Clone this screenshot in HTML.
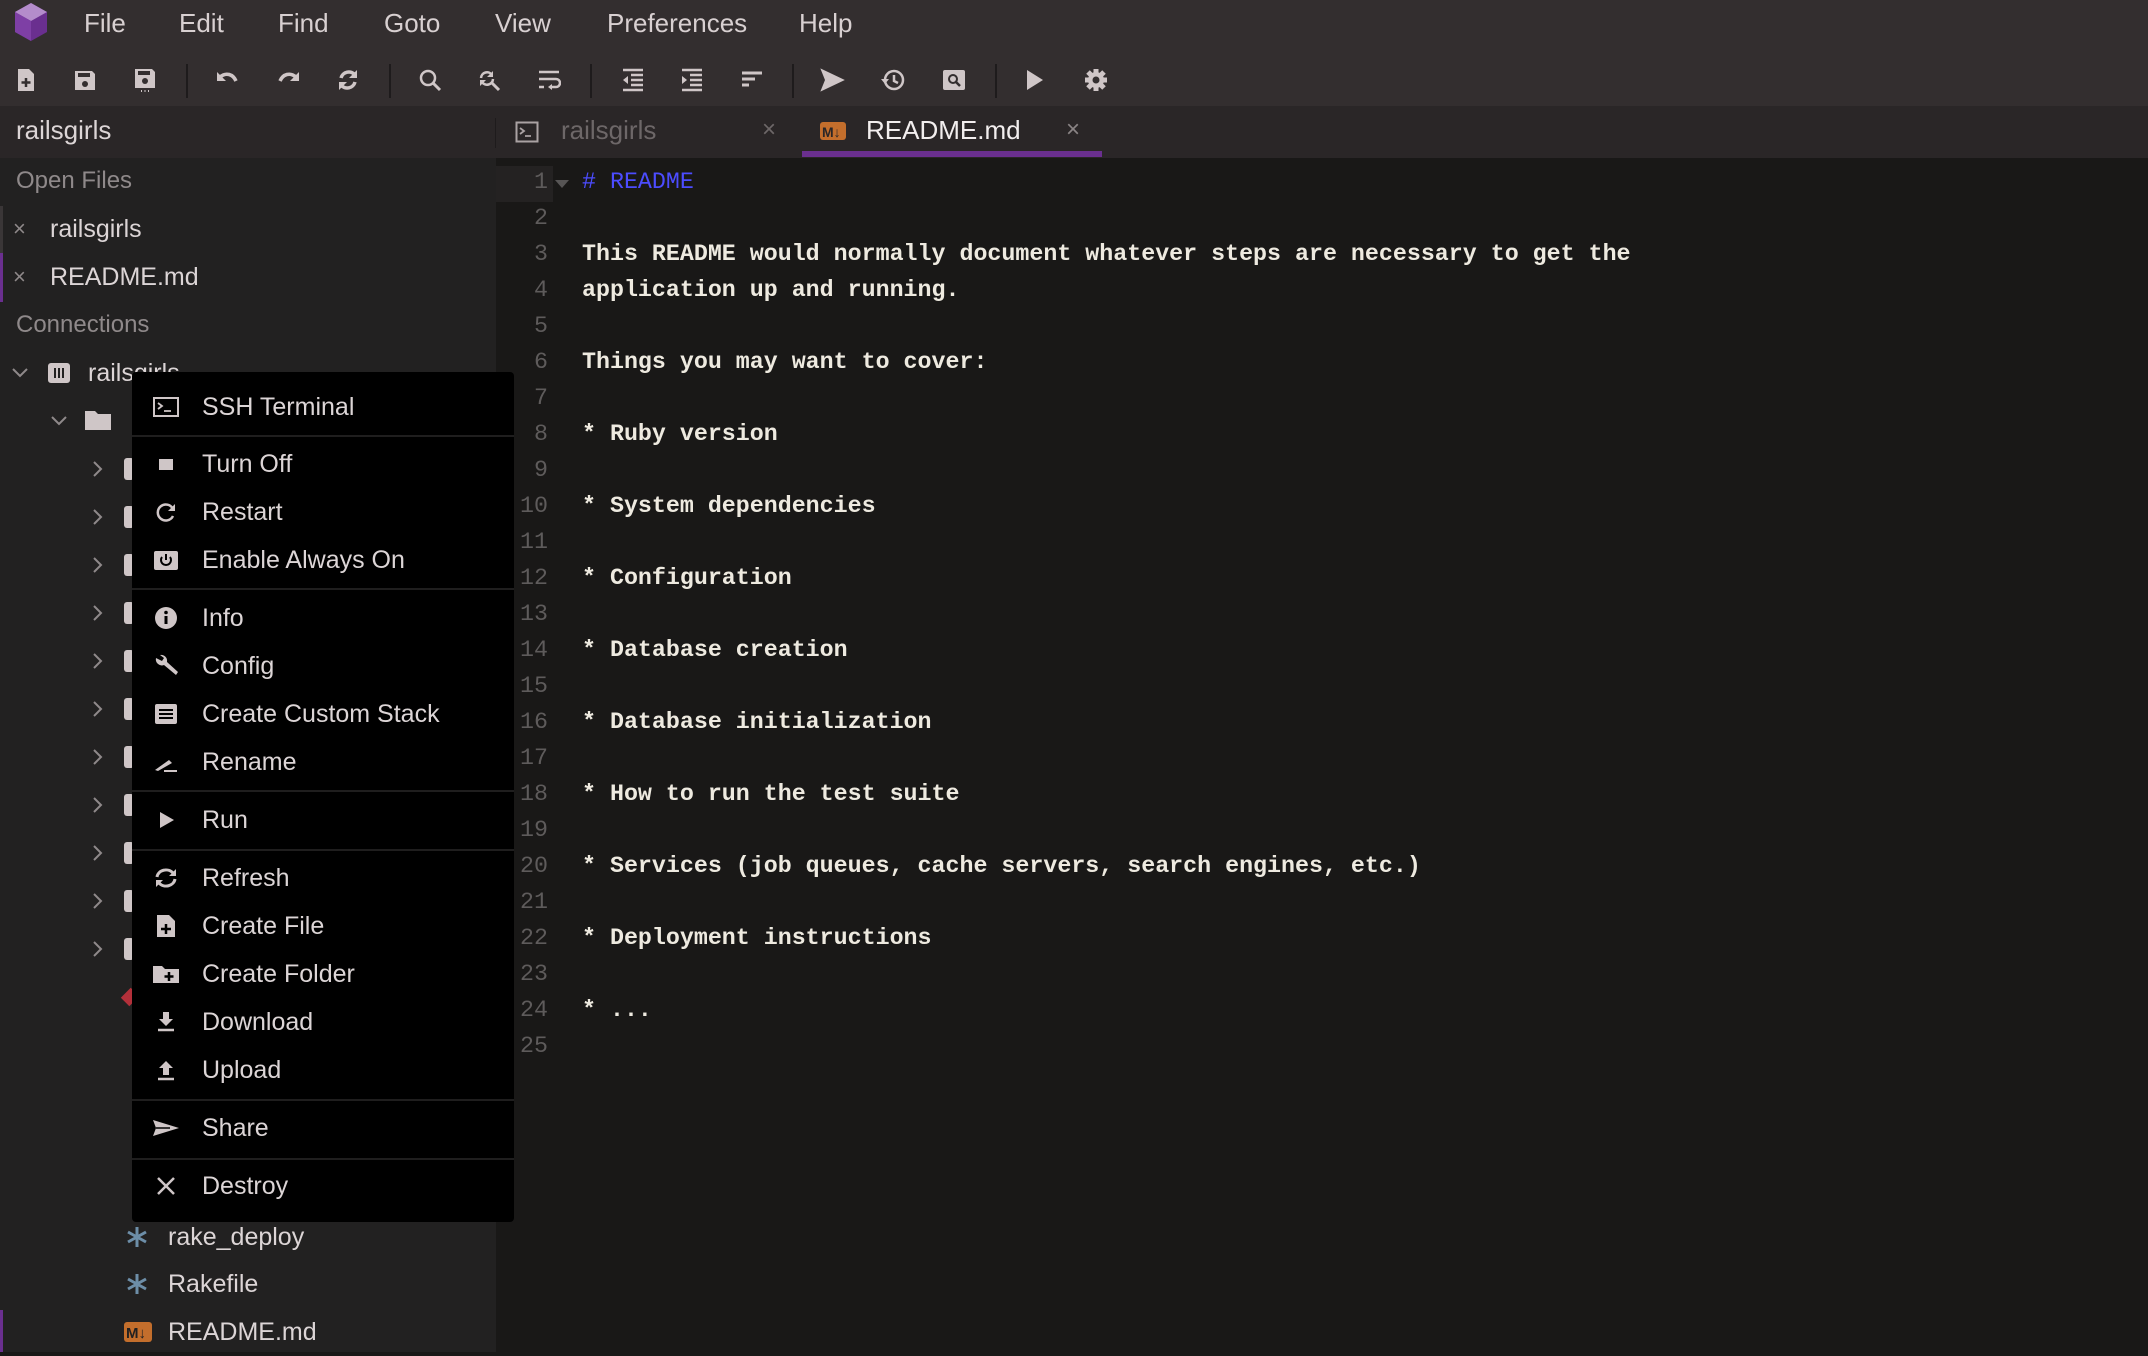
<!DOCTYPE html>
<html><head><meta charset="utf-8"><style>
*{margin:0;padding:0;box-sizing:border-box}
body{width:2148px;height:1352px;overflow:hidden;background:#191817;font-family:"Liberation Sans",sans-serif;position:relative}
.a{position:absolute;white-space:nowrap}
#top{left:0;top:0;width:2148px;height:106px;background:#332e2f}
#tabs{left:0;top:106px;width:2148px;height:52px;background:#2a2627}
#side{left:0;top:158px;width:496px;height:1194px;background:#222121}
.mn{top:8px;font-size:26px;color:#d8d0d1}
.tb{top:68px;width:24px;height:24px}
.sep{top:64px;width:2px;height:34px;background:#1e1b1c}
.st{font-size:25px;color:#dcd5d6;line-height:48px;height:48px}
.hd{font-size:24px;color:#8f898a}
#menu{left:132px;top:372px;width:382px;height:850px;background:#000;border-radius:4px}
.mi{left:70px;font-size:25px;color:#dcd5d6;line-height:48px;height:48px}
.mic{left:20px;width:28px;height:28px}
.ms{left:0;width:382px;height:2px;background:#1f1e1e}
#code{left:582px;top:164px;font-family:"Liberation Mono",monospace;font-weight:bold;font-size:23.3px;line-height:36px;color:#eeeae0;white-space:pre}
#ln{left:496px;top:164px;width:52px;font-family:"Liberation Mono",monospace;font-size:23.3px;line-height:36px;color:#5e5b5b;text-align:right;white-space:pre}
</style></head><body>
<div class="a" id="top"></div>
<div class="a" id="tabs"></div>
<div class="a" id="side"></div>
<div class="a" style="left:0;top:106px;width:496px;height:52px;background:#2a2627"></div>

<svg class="a" style="left:13px;top:2px" width="36" height="40" viewBox="0 0 36 40"><polygon points="18,1 34,10 34,30 18,39 2,30 2,10" fill="#6a2f8f"/><polygon points="18,1 34,10 18,19 2,10" fill="#b48ccb"/><polygon points="18,19 18,39 2,30 2,10" fill="#7e3fa5"/></svg>
<div class="a mn" style="left:84px">File</div>
<div class="a mn" style="left:179px">Edit</div>
<div class="a mn" style="left:278px">Find</div>
<div class="a mn" style="left:384px">Goto</div>
<div class="a mn" style="left:495px">View</div>
<div class="a mn" style="left:607px">Preferences</div>
<div class="a mn" style="left:799px">Help</div>

<svg class="a tb" style="left:14px" viewBox="0 0 24 24"><path d="M4 1h11l5 5v17H4z" fill="#cfc6c7"/><path d="M12 10v9M7.5 14.5h9" stroke="#332e2f" stroke-width="2.5"/></svg>
<svg class="a tb" style="left:73px" viewBox="0 0 24 24"><path d="M2 3h17l3 3v16H2z" fill="#cfc6c7"/><rect x="5" y="5" width="12" height="4" fill="#332e2f"/><circle cx="12" cy="16" r="3" fill="#332e2f"/></svg>
<svg class="a tb" style="left:133px" viewBox="0 0 24 24"><path d="M2 1h17l3 3v16H2z" fill="#cfc6c7"/><rect x="5" y="3" width="12" height="4" fill="#332e2f"/><circle cx="12" cy="13" r="3" fill="#332e2f"/><path d="M8 23h1M11.5 23h1M15 23h1" stroke="#cfc6c7" stroke-width="2"/></svg>
<div class="a sep" style="left:186px"></div>
<svg class="a tb" style="left:215px" viewBox="0 0 24 24"><path d="M5 9c6-5 13-3 16 4" stroke="#cfc6c7" stroke-width="3.5" fill="none"/><path d="M2 4v9h9z" fill="#cfc6c7"/></svg>
<svg class="a tb" style="left:277px" viewBox="0 0 24 24"><path d="M19 9c-6-5-13-3-16 4" stroke="#cfc6c7" stroke-width="3.5" fill="none"/><path d="M22 4v9h-9z" fill="#cfc6c7"/></svg>
<svg class="a tb" style="left:336px" viewBox="0 0 24 24"><path d="M5 10a8 8 0 0 1 14-3M19 14a8 8 0 0 1-14 3" stroke="#cfc6c7" stroke-width="3.5" fill="none"/><path d="M21 2v8h-8zM3 22v-8h8z" fill="#cfc6c7"/></svg>
<div class="a sep" style="left:389px"></div>
<svg class="a tb" style="left:418px" viewBox="0 0 24 24"><circle cx="10" cy="10" r="7" stroke="#cfc6c7" stroke-width="2.5" fill="none"/><path d="M15 15l7 7" stroke="#cfc6c7" stroke-width="3"/></svg>
<svg class="a tb" style="left:477px" viewBox="0 0 24 24"><path d="M4 10a6 6 0 0 1 11-3M16 11a6 6 0 0 1-11 3" stroke="#cfc6c7" stroke-width="2.5" fill="none"/><path d="M16 3v6h-6zM3 18v-6h6z" fill="#cfc6c7"/><path d="M15 15l7 7" stroke="#cfc6c7" stroke-width="3"/></svg>
<svg class="a tb" style="left:537px" viewBox="0 0 24 24"><path d="M2 4h20M2 11h17a4 4 0 0 1 0 8h-6M2 19h5" stroke="#cfc6c7" stroke-width="2.5" fill="none"/><path d="M11 19l4-3v6z" fill="#cfc6c7"/></svg>
<div class="a sep" style="left:590px"></div>
<svg class="a tb" style="left:621px" viewBox="0 0 24 24"><path d="M2 2h20M10 7h12M10 12h12M10 17h12M2 22h20" stroke="#cfc6c7" stroke-width="2.5"/><path d="M7 8v8l-5-4z" fill="#cfc6c7"/></svg>
<svg class="a tb" style="left:680px" viewBox="0 0 24 24"><path d="M2 2h20M10 7h12M10 12h12M10 17h12M2 22h20" stroke="#cfc6c7" stroke-width="2.5"/><path d="M2 8v8l5-4z" fill="#cfc6c7"/></svg>
<svg class="a tb" style="left:740px" viewBox="0 0 24 24"><path d="M2 5h20M2 11h13M2 17h7" stroke="#cfc6c7" stroke-width="3"/></svg>
<div class="a sep" style="left:792px"></div>
<svg class="a tb" style="left:818px;width:28px;height:28px;top:66px" viewBox="0 0 24 24"><path d="M2 2l21 10L2 22l4-10z" fill="#cfc6c7"/></svg>
<svg class="a tb" style="left:881px" viewBox="0 0 24 24"><circle cx="13" cy="12" r="9" stroke="#cfc6c7" stroke-width="2.5" fill="none"/><path d="M13 7v6l4 2" stroke="#cfc6c7" stroke-width="2.5" fill="none"/><path d="M0 11h8l-4 5z" fill="#cfc6c7"/></svg>
<svg class="a tb" style="left:942px" viewBox="0 0 24 24"><rect x="1" y="2" width="22" height="20" rx="2" fill="#cfc6c7"/><circle cx="11" cy="11" r="4" stroke="#332e2f" stroke-width="2" fill="none"/><path d="M14 14l4 4" stroke="#332e2f" stroke-width="2.5"/></svg>
<div class="a sep" style="left:995px"></div>
<svg class="a tb" style="left:1022px" viewBox="0 0 24 24"><path d="M5 2l16 10L5 22z" fill="#cfc6c7"/></svg>
<svg class="a tb" style="left:1084px" viewBox="0 0 24 24"><circle cx="12" cy="12" r="8" fill="#cfc6c7"/><path d="M12 1v22M1 12h22M4 4l16 16M20 4L4 20" stroke="#cfc6c7" stroke-width="5"/><circle cx="12" cy="12" r="3.5" fill="#332e2f"/></svg>

<div class="a" style="left:16px;top:115px;font-size:26px;color:#dcd5d6">railsgirls</div>
<div class="a" style="left:495px;top:118px;width:1px;height:30px;background:#1e1b1c"></div>
<svg class="a" style="left:515px;top:120px" width="24" height="24" viewBox="0 0 24 24"><rect x="1.5" y="2.5" width="21" height="19" stroke="#aaa2a3" stroke-width="2" fill="none"/><path d="M5 8l4 3-4 3M10 16h6" stroke="#aaa2a3" stroke-width="1.8" fill="none"/></svg>
<div class="a" style="left:561px;top:115px;font-size:26px;color:#6d6768">railsgirls</div>
<div class="a" style="left:762px;top:116px;font-size:24px;color:#6d6768">×</div>
<svg class="a" style="left:820px;top:122px" width="26" height="18" viewBox="0 0 26 18"><rect width="26" height="18" rx="3" fill="#c36e2c"/><text x="2" y="15" font-family="Liberation Sans" font-weight="bold" font-size="14" fill="#2a2627">M↓</text></svg>
<div class="a" style="left:866px;top:115px;font-size:26px;color:#f2eeee">README.md</div>
<div class="a" style="left:1066px;top:116px;font-size:24px;color:#8a8485">×</div>
<div class="a" style="left:802px;top:151px;width:300px;height:6px;background:#6a2f8f"></div>

<div class="a hd" style="left:16px;top:167px">Open Files</div>
<div class="a" style="left:0;top:206px;width:3px;height:47px;background:#3a3637"></div>
<div class="a" style="left:0;top:253px;width:3px;height:49px;background:#6a2f8f"></div>
<div class="a st" style="left:13px;top:205px;color:#8f898a;font-size:22px">×</div>
<div class="a st" style="left:50px;top:205px">railsgirls</div>
<div class="a st" style="left:13px;top:253px;color:#8f898a;font-size:22px">×</div>
<div class="a st" style="left:50px;top:253px">README.md</div>
<div class="a hd" style="left:16px;top:311px">Connections</div>
<svg class="a" style="left:11px;top:366px" width="18" height="14" viewBox="0 0 18 14"><path d="M2 3l7 7 7-7" stroke="#8f898a" stroke-width="2" fill="none"/></svg>
<svg class="a" style="left:47px;top:361px" width="24" height="24" viewBox="0 0 24 24"><rect x="1" y="2" width="22" height="20" rx="3" fill="#cfc6c7"/><path d="M8 7v10M12 7v10M16 7v10" stroke="#222121" stroke-width="2"/></svg>
<div class="a st" style="left:88px;top:349px">railsgirls</div>
<svg class="a" style="left:50px;top:414px" width="18" height="14" viewBox="0 0 18 14"><path d="M2 3l7 7 7-7" stroke="#8f898a" stroke-width="2" fill="none"/></svg>
<svg class="a" style="left:84px;top:408px" width="28" height="24" viewBox="0 0 28 24"><path d="M1 3h10l3 3h13v16H1z" fill="#cfc6c7"/></svg>
<div id="chev"></div>
<script>
var h='';for(var k=0;k<11;k++){var y=469+48*k;h+='<svg class="a" style="left:91px;top:'+(y-9)+'px" width="14" height="18" viewBox="0 0 14 18"><path d="M3 2l7 7-7 7" stroke="#8f898a" stroke-width="2" fill="none"/></svg><div class="a" style="left:124px;top:'+(y-11)+'px;width:10px;height:22px;border-radius:3px;background:#cfc6c7"></div>';}
document.getElementById('chev').outerHTML=h;
</script>
<div class="a" style="left:124px;top:990px;width:12px;height:14px;background:#b3303a;transform:rotate(45deg)"></div>
<div class="a" style="left:0;top:1310px;width:3px;height:42px;background:#6a2f8f"></div>
<svg class="a" style="left:126px;top:1226px" width="22" height="22" viewBox="0 0 22 22"><path d="M11 1v20M2 6l18 10M2 16L20 6" stroke="#6d8ea8" stroke-width="3"/></svg>
<div class="a st" style="left:168px;top:1213px">rake_deploy</div>
<svg class="a" style="left:126px;top:1273px" width="22" height="22" viewBox="0 0 22 22"><path d="M11 1v20M2 6l18 10M2 16L20 6" stroke="#6d8ea8" stroke-width="3"/></svg>
<div class="a st" style="left:168px;top:1260px">Rakefile</div>
<svg class="a" style="left:124px;top:1322px" width="28" height="20" viewBox="0 0 28 20"><rect width="28" height="20" rx="3" fill="#c36e2c"/><text x="2" y="16" font-family="Liberation Sans" font-weight="bold" font-size="15" fill="#222121">M↓</text></svg>
<div class="a st" style="left:168px;top:1308px">README.md</div>

<div class="a" style="left:496px;top:166px;width:57px;height:36px;background:#242222"></div>
<svg class="a" style="left:554px;top:178px" width="16" height="12" viewBox="0 0 16 12"><path d="M1 2h14l-7 8z" fill="#575555"/></svg>
<div class="a" id="ln">1
2
3
4
5
6
7
8
9
10
11
12
13
14
15
16
17
18
19
20
21
22
23
24
25</div>
<div class="a" id="code"><span style="color:#4c4cff;font-weight:normal"># README</span>

This README would normally document whatever steps are necessary to get the
application up and running.

Things you may want to cover:

* Ruby version

* System dependencies

* Configuration

* Database creation

* Database initialization

* How to run the test suite

* Services (job queues, cache servers, search engines, etc.)

* Deployment instructions

* ...
</div>

<div class="a" id="menu">
<svg class="a mic" style="top:21px" viewBox="0 0 28 28"><rect x="2" y="5" width="24" height="18" stroke="#cfc6c7" stroke-width="2" fill="none"/><path d="M6 10l4 3-4 3M12 18h7" stroke="#cfc6c7" stroke-width="1.8" fill="none"/></svg>
<div class="a mi" style="top:11px">SSH Terminal</div>
<div class="a ms" style="top:63px"></div>
<svg class="a mic" style="top:78px" viewBox="0 0 28 28"><rect x="7" y="9" width="14" height="11" fill="#cfc6c7"/></svg>
<div class="a mi" style="top:68px">Turn Off</div>
<svg class="a mic" style="top:126px" viewBox="0 0 28 28"><path d="M21 11a8 8 0 1 0 0 7" stroke="#cfc6c7" stroke-width="2.5" fill="none"/><path d="M23 6v7h-7z" fill="#cfc6c7"/></svg>
<div class="a mi" style="top:116px">Restart</div>
<svg class="a mic" style="top:174px" viewBox="0 0 28 28"><rect x="2" y="5" width="24" height="19" rx="2" fill="#cfc6c7"/><path d="M10 11a5 5 0 1 0 8 0" stroke="#000" stroke-width="2" fill="none"/><path d="M14 8v6" stroke="#000" stroke-width="2"/></svg>
<div class="a mi" style="top:164px">Enable Always On</div>
<div class="a ms" style="top:216px"></div>
<svg class="a mic" style="top:232px" viewBox="0 0 28 28"><circle cx="14" cy="14" r="11" fill="#cfc6c7"/><rect x="12.5" y="12" width="3" height="8" fill="#000"/><circle cx="14" cy="8.5" r="1.8" fill="#000"/></svg>
<div class="a mi" style="top:222px">Info</div>
<svg class="a mic" style="top:280px" viewBox="0 0 28 28"><path d="M4 6a6 6 0 0 0 8 7l12 10 2-3-11-10a6 6 0 0 0-7-7l4 3-2 3z" fill="#cfc6c7"/></svg>
<div class="a mi" style="top:270px">Config</div>
<svg class="a mic" style="top:328px" viewBox="0 0 28 28"><rect x="3" y="4" width="22" height="20" rx="2" fill="#cfc6c7"/><path d="M7 10h14M7 14h14M7 18h14" stroke="#000" stroke-width="2"/></svg>
<div class="a mi" style="top:318px">Create Custom Stack</div>
<svg class="a mic" style="top:376px" viewBox="0 0 28 28"><path d="M3 22l14-10 3 3-14 8z" fill="#cfc6c7"/><path d="M12 23h13" stroke="#cfc6c7" stroke-width="2"/></svg>
<div class="a mi" style="top:366px">Rename</div>
<div class="a ms" style="top:418px"></div>
<svg class="a mic" style="top:434px" viewBox="0 0 28 28"><path d="M8 6l14 8-14 8z" fill="#cfc6c7"/></svg>
<div class="a mi" style="top:424px">Run</div>
<div class="a ms" style="top:477px"></div>
<svg class="a mic" style="top:492px" viewBox="0 0 28 28"><path d="M5 13a9 8 0 0 1 16-4M23 15a9 8 0 0 1-16 4" stroke="#cfc6c7" stroke-width="3" fill="none"/><path d="M24 5v7h-7zM4 23v-7h7z" fill="#cfc6c7"/></svg>
<div class="a mi" style="top:482px">Refresh</div>
<svg class="a mic" style="top:540px" viewBox="0 0 28 28"><path d="M5 3h12l6 6v16H5z" fill="#cfc6c7"/><path d="M14 12v10M9 17h10" stroke="#000" stroke-width="2.5"/></svg>
<div class="a mi" style="top:530px">Create File</div>
<svg class="a mic" style="top:588px" viewBox="0 0 28 28"><path d="M1 6h9l3 3h14v14H1z" fill="#cfc6c7"/><path d="M17 12v9M12.5 16.5h9" stroke="#000" stroke-width="2.5"/></svg>
<div class="a mi" style="top:578px">Create Folder</div>
<svg class="a mic" style="top:636px" viewBox="0 0 28 28"><path d="M11 4h6v7h4l-7 7-7-7h4z" fill="#cfc6c7"/><path d="M6 22h16" stroke="#cfc6c7" stroke-width="2.5"/></svg>
<div class="a mi" style="top:626px">Download</div>
<svg class="a mic" style="top:684px" viewBox="0 0 28 28"><path d="M11 19h6v-7h4l-7-7-7 7h4z" fill="#cfc6c7"/><path d="M6 23h16" stroke="#cfc6c7" stroke-width="2.5"/></svg>
<div class="a mi" style="top:674px">Upload</div>
<div class="a ms" style="top:727px"></div>
<svg class="a mic" style="top:742px" viewBox="0 0 28 28"><path d="M1 6l26 8-26 8 3-8z" fill="#cfc6c7"/><path d="M4 14h14" stroke="#000" stroke-width="1.5"/></svg>
<div class="a mi" style="top:732px">Share</div>
<div class="a ms" style="top:786px"></div>
<svg class="a mic" style="top:800px" viewBox="0 0 28 28"><path d="M6 6l16 16M22 6L6 22" stroke="#cfc6c7" stroke-width="2.5"/></svg>
<div class="a mi" style="top:790px">Destroy</div>
</div>
</body></html>
